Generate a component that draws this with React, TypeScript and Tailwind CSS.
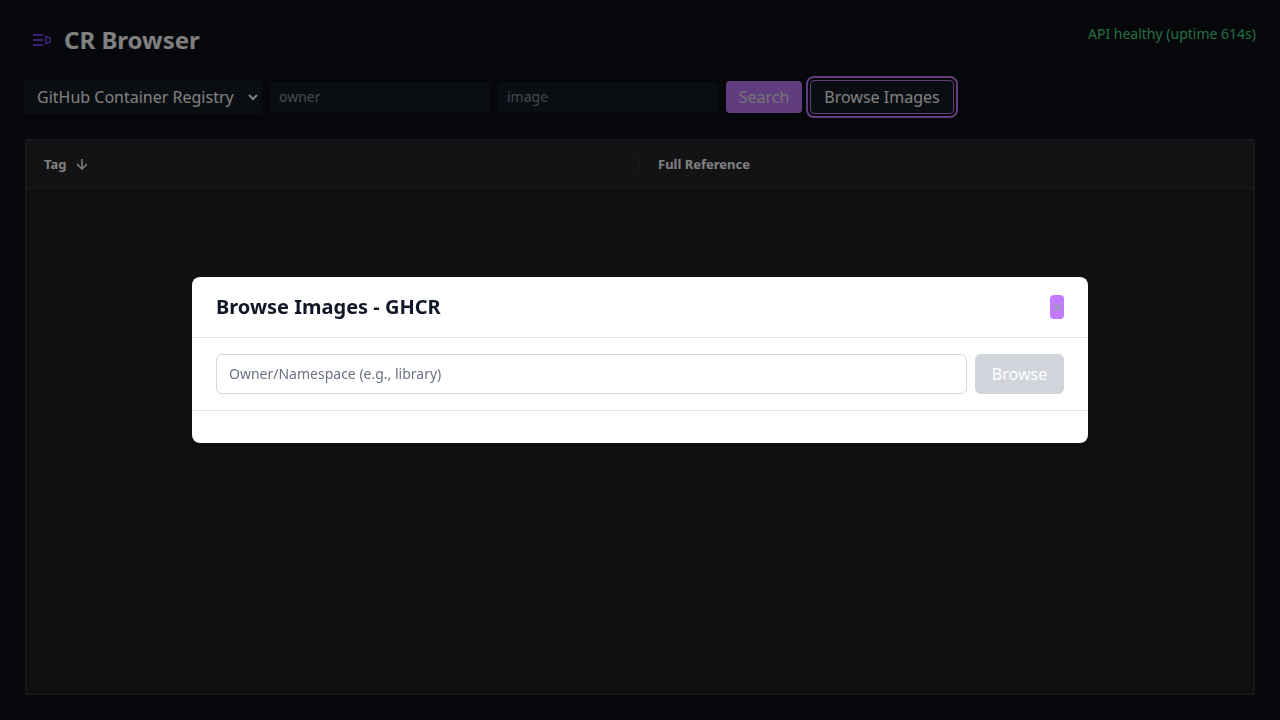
import { useState } from "react";

function Logo() {
  return (
    <svg viewBox="0 0 32 32" className="size-8 shrink-0" fill="none" stroke="#7c3aed" aria-hidden="true">
      <rect width="32" height="32" rx="6" fill="#0d1117" stroke="none" />
      <path d="M9 11h10M9 16h10M9 21h10" strokeWidth="2" />
      <path d="M22 12.5v7l4.2-1.6v-3.8z" strokeWidth="1.6" />
    </svg>
  );
}

function SortArrow() {
  return (
    <svg viewBox="0 0 16 16" className="size-4" fill="none" stroke="currentColor" strokeWidth="1.5" aria-hidden="true">
      <path d="M8 3v10M3 8l5 5 5-5" />
    </svg>
  );
}

function Toolbar() {
  const field =
    "w-[220px] rounded border border-[#141c24] bg-[#141c24] px-2 py-1 text-sm text-white placeholder:text-[#8b929c]";
  return (
    <form className="mb-6 flex flex-wrap items-center gap-2" onSubmit={(e) => e.preventDefault()}>
      <select
        aria-label="Registry"
        className="h-[34px] w-[238px] border border-[#141c24] bg-[#141c24] px-2 py-1 scheme-dark"
      >
        <option>GitHub Container Registry</option>
        <option>Docker Hub</option>
      </select>
      <input aria-label="Owner" placeholder="owner" className={field} />
      <input aria-label="Image" placeholder="image" className={field} />
      <button type="submit" className="min-w-[76px] rounded bg-purple-400 px-3 py-1 text-gray-200">
        Search
      </button>
      <button
        type="button"
        className="min-w-36 rounded border border-purple-400 bg-[#141c24] px-3 py-1 outline-2 outline-offset-2 outline-purple-400"
      >
        Browse Images
      </button>
    </form>
  );
}

function TagTable() {
  return (
    <div className="flex grow flex-col border border-[#0d1117]">
      <div className="grow rounded-xs border border-[#36363e] bg-[#212122]">
        <table className="w-full table-fixed border-collapse text-[13px] leading-5 font-bold">
          <thead>
            <tr className="h-12 border-b border-[#36363e] bg-[#27262d] text-left">
              <th scope="col" className="p-0">
                <div className="flex items-center justify-between pl-[18px]">
                  <span className="flex items-center gap-2">
                    Tag
                    <SortArrow />
                  </span>
                  <span className="h-3.5 w-0.5 bg-[#2e2e35]" />
                </div>
              </th>
              <th scope="col" className="px-[18px] py-0">
                Full Reference
              </th>
            </tr>
          </thead>
          <tbody />
        </table>
      </div>
    </div>
  );
}

function BrowseDialog() {
  const [owner, setOwner] = useState("");
  return (
    <div className="fixed inset-0 flex items-center justify-center bg-black/50">
      <div
        role="dialog"
        aria-modal="true"
        aria-labelledby="dialog-title"
        className="w-full max-w-4xl rounded-lg bg-white text-gray-900 shadow-xl"
      >
        <div className="flex items-center justify-between border-b border-gray-200 px-6 py-4">
          <h2 id="dialog-title" className="text-xl font-bold">
            Browse Images - GHCR
          </h2>
          <button type="button" aria-label="Close" className="w-3.5 rounded bg-purple-400 text-center text-gray-400">
            ✕
          </button>
        </div>
        <form
          className="flex gap-2 border-b border-gray-200 px-6 py-4"
          onSubmit={(e) => e.preventDefault()}
        >
          <input
            aria-label="Owner or namespace"
            value={owner}
            onChange={(e) => setOwner(e.target.value)}
            placeholder="Owner/Namespace (e.g., library)"
            className="min-w-0 grow rounded-md border border-gray-300 px-3 py-2 text-sm placeholder:text-gray-500"
          />
          <button
            type="submit"
            disabled={owner === ""}
            className="min-w-[89px] rounded-md bg-purple-400 px-4 py-2 text-white disabled:bg-[#d1d5db]"
          >
            Browse
          </button>
        </form>
        <div className="p-4" />
      </div>
    </div>
  );
}

export default function App() {
  return (
    <div className="flex min-h-screen flex-col bg-[#0b0f17] p-6 font-['Noto_Sans',sans-serif] text-white">
      <header className="mb-6 flex items-start justify-between">
        <h1 className="flex items-center gap-2 text-2xl font-bold">
          <Logo />
          CR Browser
        </h1>
        <p className="text-sm text-[#4ade80]">API healthy (uptime 614s)</p>
      </header>
      <Toolbar />
      <TagTable />
      <BrowseDialog />
    </div>
  );
}
